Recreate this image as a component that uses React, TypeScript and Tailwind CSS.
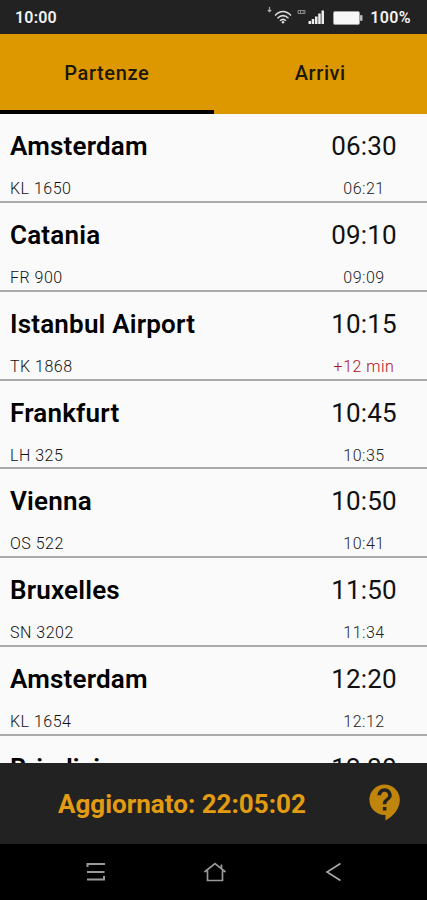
const flights = [
  { city: 'Amsterdam', code: 'KL 1650', time: '06:30', note: '06:21' },
  { city: 'Catania', code: 'FR 900', time: '09:10', note: '09:09' },
  { city: 'Istanbul Airport', code: 'TK 1868', time: '10:15', note: '+12 min', late: true },
  { city: 'Frankfurt', code: 'LH 325', time: '10:45', note: '10:35' },
  { city: 'Vienna', code: 'OS 522', time: '10:50', note: '10:41' },
  { city: 'Bruxelles', code: 'SN 3202', time: '11:50', note: '11:34' },
  { city: 'Amsterdam', code: 'KL 1654', time: '12:20', note: '12:12' },
];

function StatusBar() {
  return (
    <header className="flex h-[33.5px] shrink-0 items-center justify-between bg-[#222222] pr-4 pl-[15px] text-base font-semibold text-[#f2f2f2]">
      <span className="pt-0.5 tracking-[0.2px]">10:00</span>
      <div className="flex items-center">
        <svg width="100" height="33" viewBox="0 0 100 33" className="mr-[5px]">
          <path d="M4.500 7v5M2.800 10l1.700 1.700L6.200 10" fill="none" stroke="#aaa" strokeWidth="1.200" />
          <g fill="none" stroke="#dedede" strokeWidth="1.500">
            <path d="M10 15.500Q18 7.500 26 15.500M12.500 18.200Q18 13 23.500 18.200M15 20.700Q18 18 21 20.700" />
          </g>
          <circle cx="18" cy="22.300" r="1.200" fill="#dedede" />
          <path d="M33 10.500h7v3h-7zM35.500 10.500v3M37.500 12h2" fill="none" stroke="#8a8a8a" strokeWidth="1" />
          <path d="M43.500 21H46v3h-2.500zM46.700 19h2.500v5h-2.500zM50 16.500h2.500V24H50zM53.200 13.500h2.500V24h-2.500zM56.500 10.500h2.500V24h-2.500z" fill="#ededed" />
          <rect x="68.500" y="11.500" width="26" height="13" rx="1.500" fill="#f7f7f7" stroke="#a0a0a0" />
          <rect x="95" y="15" width="2.500" height="6" rx="1" fill="#bbb" />
        </svg>
        <span className="pt-0.5 tracking-[0.4px]">100%</span>
      </div>
    </header>
  );
}

function Tabs() {
  return (
    <nav className="grid h-20 shrink-0 grid-cols-2 bg-[#dd9800] text-xl font-medium tracking-[0.6px] text-[#1d1803]">
      <button className="border-b-4 border-black pt-0.5">Partenze</button>
      <button className="border-b-4 border-transparent pt-0.5">Arrivi</button>
    </nav>
  );
}

export default function App() {
  return (
    <div className="flex h-[900px] w-[427px] flex-col overflow-hidden bg-[#fafafa] font-['Roboto',sans-serif]">
      <StatusBar />
      <Tabs />
      <main className="min-h-0 flex-1 overflow-hidden pt-[0.7px]">
        {flights.map((f) => (
          <section key={f.code} className="flex h-[88.8px] justify-between border-b-2 border-[#aaaaaa] pr-[14px] pl-[10px]">
            <div className="flex flex-col whitespace-nowrap text-black">
              <h2 className="mt-4 text-[26px] leading-8 font-semibold tracking-[0.2px]">{f.city}</h2>
              <span className="mt-[17px] text-base leading-5 font-light tracking-[0.5px] text-[#111]">{f.code}</span>
            </div>
            <div className="flex w-[98px] flex-col items-center">
              <span className="mt-4 text-[26px] leading-8 tracking-[0.2px] text-[#111]">{f.time}</span>
              <span className={f.late ? 'mt-[17px] text-base leading-5 font-light tracking-[0.5px] text-[#b00f18]' : 'mt-[17px] text-base leading-5 font-light tracking-[0.5px] text-[#222]'}>{f.note}</span>
            </div>
          </section>
        ))}
        <section className="flex justify-between pr-[14px] pl-[10px]">
          <h2 className="mt-4 text-[26px] leading-8 font-semibold tracking-[0.2px]">Brindisi</h2>
          <span className="mt-4 w-[98px] text-center text-[26px] leading-8 tracking-[0.2px] text-[#111]">12:30</span>
        </section>
      </main>
      <footer className="flex h-[81px] shrink-0 items-center bg-[#222222] pr-5 pl-[58px]">
        <strong className="flex-1 pt-0.5 text-[26px] font-bold text-[#e39c12]">Aggiornato: 22:05:02</strong>
        <svg width="43" height="43" viewBox="0 0 24 24" fill="#bf850c" className="-mt-0.5">
          <path d="M11.5 2C6.810 2 3 5.810 3 10.500S6.810 19 11.500 19h.5v3c4.860-2.340 8-7 8-11.500C20 5.810 16.190 2 11.500 2zm1 14.500h-2v-2h2v2zm0-3.500h-2c0-3.250 3-3 3-5 0-1.100-.9-2-2-2s-2 .9-2 2h-2c0-2.210 1.790-4 4-4s4 1.790 4 4c0 2.500-3 2.750-3 5z" />
        </svg>
      </footer>
      <div className="grid h-14 shrink-0 grid-cols-[154.500px_119px_1fr] items-center bg-black">
        <svg width="20" height="20" viewBox="0 0 20 20" className="ml-[86px]" fill="none" stroke="#999" strokeWidth="2">
          <path d="M19 2H1.500V5M1 10H18.500M1 17.500H18V14" />
        </svg>
        <svg width="24" height="22" viewBox="0 0 24 22" className="ml-12" fill="none" stroke="#999" strokeWidth="1.700">
          <path d="M1.500 11L12 2.500 22.500 11M4.500 9.500V19.500H19.500V9.500M18.500 7V3.500" />
        </svg>
        <svg width="18" height="20" viewBox="0 0 18 20" className="ml-[51px]" fill="none" stroke="#aaa" strokeWidth="1.600">
          <path d="M15.500 1.500L2 10l13.500 8.500" />
        </svg>
      </div>
    </div>
  );
}
